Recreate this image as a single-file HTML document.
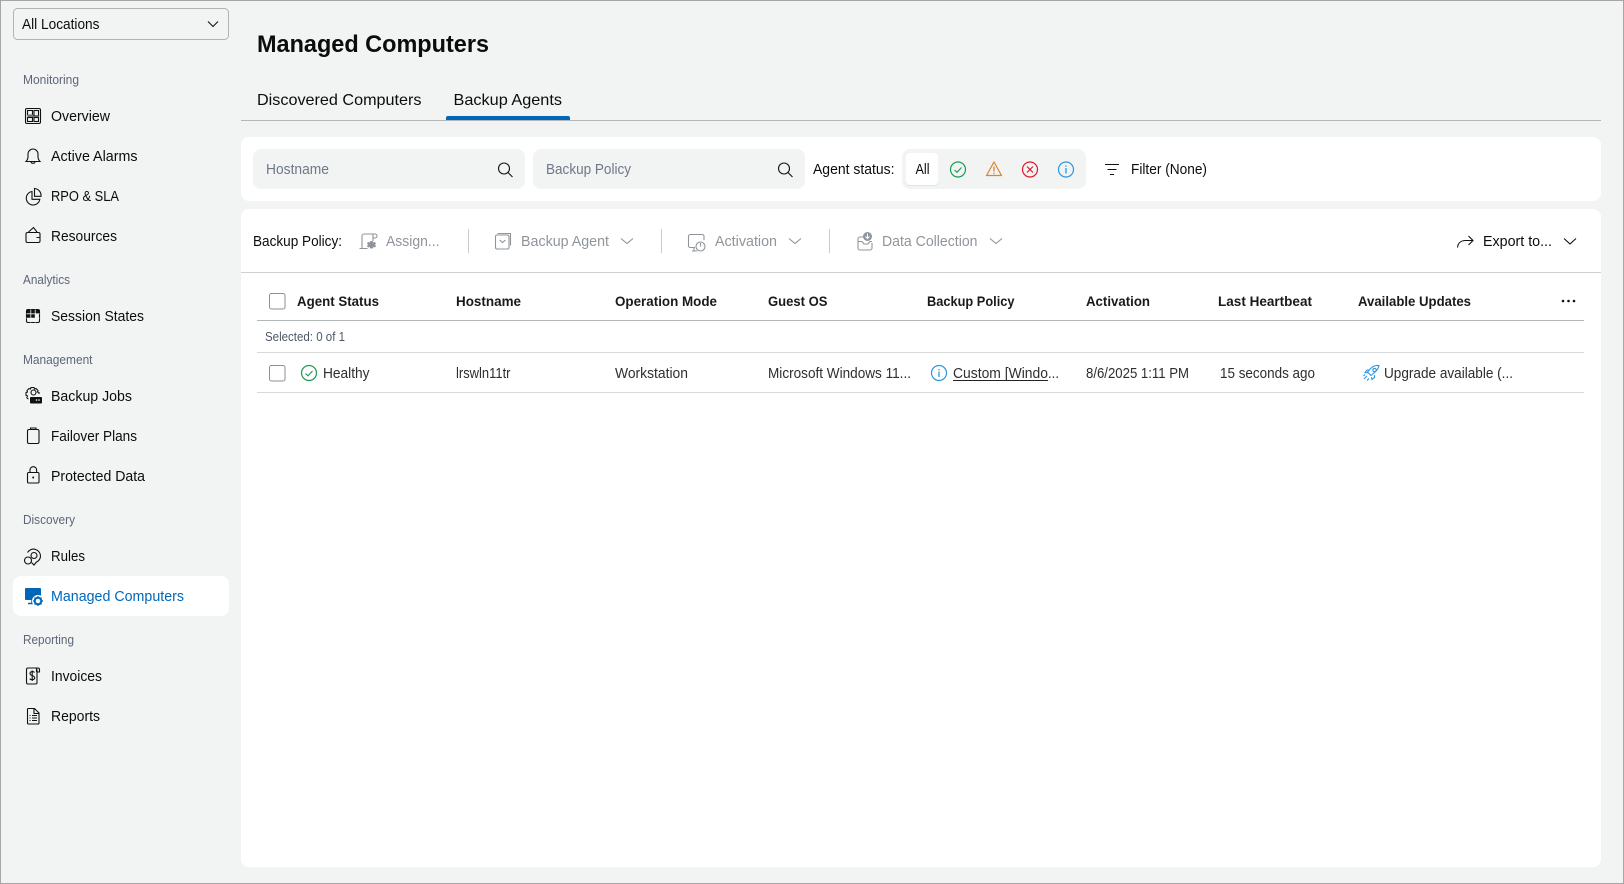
<!DOCTYPE html>
<html lang="en">
<head>
<meta charset="utf-8">
<title>Managed Computers</title>
<style>
html,body{margin:0;padding:0;background:#f2f4f4;overflow:hidden}
svg{display:block}
text{font-family:"Liberation Sans",sans-serif;font-size:14.8px;fill:#0c0c0c}
.l{font-size:12.5px;fill:#5c6678}
.g{fill:#8f959b}
.h{font-weight:bold;font-size:14px;fill:#1a1a1a}
.c{fill:#2e2e2e}
.i{fill:none;stroke:#111;stroke-width:1.1}
.d{fill:none;stroke:#8f959b;stroke-width:1.1}
</style>
</head>
<body>
<svg xmlns="http://www.w3.org/2000/svg" width="1624" height="884" viewBox="0 0 1624 884">
<rect x="0.5" y="0.5" width="1623" height="883" fill="#f2f4f4" stroke="#a6a6a6"/>

<!-- Location dropdown -->
<rect x="13.5" y="8.5" width="215" height="31" rx="4" fill="#f2f4f4" stroke="#b0b3b3"/>
<text x="22" y="29" textLength="77.5" lengthAdjust="spacingAndGlyphs">All Locations</text>
<path class="i" d="M208 21.5l5 5 5-5"/>

<!-- Sidebar -->
<text class="l" x="23" y="84" textLength="56" lengthAdjust="spacingAndGlyphs">Monitoring</text>
<text x="51" y="121" textLength="59" lengthAdjust="spacingAndGlyphs">Overview</text>
<text x="51" y="161" textLength="86.5" lengthAdjust="spacingAndGlyphs">Active Alarms</text>
<text x="51" y="201" textLength="68" lengthAdjust="spacingAndGlyphs">RPO &amp; SLA</text>
<text x="51" y="241" textLength="66" lengthAdjust="spacingAndGlyphs">Resources</text>
<text class="l" x="23" y="284" textLength="47" lengthAdjust="spacingAndGlyphs">Analytics</text>
<text x="51" y="321" textLength="93" lengthAdjust="spacingAndGlyphs">Session States</text>
<text class="l" x="23" y="364" textLength="69.500" lengthAdjust="spacingAndGlyphs">Management</text>
<text x="51" y="401" textLength="81" lengthAdjust="spacingAndGlyphs">Backup Jobs</text>
<text x="51" y="441" textLength="86" lengthAdjust="spacingAndGlyphs">Failover Plans</text>
<text x="51" y="481" textLength="94" lengthAdjust="spacingAndGlyphs">Protected Data</text>
<text class="l" x="23" y="524" textLength="52" lengthAdjust="spacingAndGlyphs">Discovery</text>
<text x="51" y="561" textLength="34" lengthAdjust="spacingAndGlyphs">Rules</text>
<rect x="13" y="576" width="216" height="40" rx="8" fill="#fff"/>
<text x="51" y="601" textLength="133" lengthAdjust="spacingAndGlyphs" style="fill:#0067b8">Managed Computers</text>
<text class="l" x="23" y="644" textLength="51" lengthAdjust="spacingAndGlyphs">Reporting</text>
<text x="51" y="681" textLength="51" lengthAdjust="spacingAndGlyphs">Invoices</text>
<text x="51" y="721" textLength="49" lengthAdjust="spacingAndGlyphs">Reports</text>

<!-- Overview icon -->
<rect class="i" x="25.500" y="108.500" width="15" height="15" rx="1.500"/>
<rect class="i" x="27.500" y="110.500" width="5" height="4.500"/>
<rect class="i" x="34" y="110.500" width="4.500" height="5.500"/>
<rect x="27.500" y="114.500" width="6" height="3" fill="#777"/>
<rect class="i" x="27.500" y="117.500" width="5" height="4"/>
<rect class="i" x="34" y="117.500" width="4.500" height="4"/>
<!-- Bell -->
<path class="i" d="M26 161.500h14c-1.500-1.500-2-3-2-5v-2.500a5 5 0 0 0-10 0v2.500c0 2-.5 3.500-2 5z"/>
<path class="i" d="M31 162c.3 1.700 3.700 1.700 4 0"/>
<!-- Pie -->
<path class="i" d="M32 191.500a6.800 6.800 0 1 0 7.800 7.800h-7.800z"/>
<path class="i" d="M34.500 188.500v7.800h6.500a7 7 0 0 0-6.500-7.800z"/>
<!-- Wallet -->
<path class="i" d="M27.500 232.500h11a1.500 1.500 0 0 1 1.500 1.500v7a1.500 1.500 0 0 1-1.500 1.500h-11a1.500 1.500 0 0 1-1.500-1.500v-7a1.500 1.500 0 0 1 1.500-1.500z"/>
<path class="i" d="M28.500 232l5-4.500 3.500 4.500M36.500 237.500h3.500"/>
<!-- Session states -->
<rect class="i" x="26.500" y="309.500" width="13" height="13" rx="1.500"/>
<path d="M26.500 311a1.500 1.500 0 0 1 1.500-1.500h2.800v4.300h-4.300zM30.800 309.500h4.400v4.300h-4.400zM26.500 313.800h4.300v4.400h-4.300zM30.800 313.800h4.400v4.400h-4.400zM35.200 309.500h2.800a1.500 1.500 0 0 1 1.500 1.500v2.800h-4.300z" fill="#111"/>
<path d="M30.800 309.500v13M35.200 309.500v13M26.500 313.800h13M26.500 318.200h13" fill="none" stroke="#f2f4f4" stroke-width=".8"/>
<!-- Backup jobs -->
<path class="i" d="M28.500 399c-1.200-.5-2-1-1.500-2l.5-1-1.500-.8v-2.700l1.500-.5-.5-1.500 2-2 1.500.5.5-1.500h3l.5 1.500 1.500-.5 2 2-.5 1.500 1.500.5v1.500"/>
<circle class="i" cx="33.500" cy="392.500" r="2.500"/>
<rect x="30" y="397" width="12" height="6.500" rx="1" fill="#111"/>
<circle cx="39" cy="400" r=".8" fill="#fff"/><circle cx="36.500" cy="400" r=".8" fill="#fff"/>
<!-- Clipboard -->
<rect class="i" x="27.500" y="429.500" width="11.500" height="14" rx="1.500"/>
<path class="i" d="M30.500 429.500v-1.500h5.500v1.500"/>
<!-- Lock -->
<rect class="i" x="27.500" y="472.500" width="11.500" height="10.500" rx="1.200"/>
<path class="i" d="M30 472.500v-2.500a3.300 3.300 0 0 1 6.600 0v2.500"/>
<circle cx="33.200" cy="477.500" r="1" fill="#111"/>
<!-- Rules -->
<path class="i" d="M27.500 552.500a7 7 0 0 1 13 3.500c0 3-2 5-4 6l-2.500 3-2.500-2.500"/>
<circle class="i" cx="34" cy="555.500" r="3"/>
<circle class="i" cx="28" cy="560.500" r="3.500"/>
<!-- Managed computers -->
<rect x="25" y="588" width="16" height="12" rx="1" fill="#0067b8"/>
<path d="M32 600v3.500M28 603.500h7" stroke="#0067b8" stroke-width="1.500" fill="none"/>
<circle cx="38" cy="601" r="6" fill="#fff"/>
<circle cx="38" cy="601" r="3.300" fill="none" stroke="#0067b8" stroke-width="2"/>
<path d="M38 596v2M38 604v2M33 601h2M41 601h2M34.500 597.500l1.400 1.400M40.100 603.100l1.400 1.400M34.500 604.500l1.400-1.400M40.100 598.900l1.400-1.400" stroke="#0067b8" stroke-width="1.300"/>
<!-- Invoice -->
<path class="i" d="M36.500 672v-2.500a1.500 1.500 0 0 1 3 0v2.500h-3M37.500 668h-9.500a1.500 1.500 0 0 0-1.500 1.500v13a1.500 1.500 0 0 0 1.500 1.500h7.500a1.500 1.500 0 0 0 1.500-1.500v-13"/>
<path d="M34.500 672.500c-1-1.300-4.500-1.300-4.500 1 0 2.500 4.700 1.700 4.700 4.300 0 2.300-3.700 2.300-5 1M32.200 670.500v10.500" fill="none" stroke="#111" stroke-width="1.100"/>
<!-- Report -->
<path class="i" d="M27.500 709.500a1 1 0 0 1 1-1h6l4.500 4.500v10a1 1 0 0 1-1 1h-9.500a1 1 0 0 1-1-1zM34 708.500v5h5"/>
<path class="i" d="M29.500 715.500h1M32 715.500h5M29.500 718h1M32 718h5M29.500 720.500h1M32 720.500h5"/>

<!-- Title and tabs -->
<text x="257" y="52" textLength="232" lengthAdjust="spacingAndGlyphs" style="font-size:24.500px;font-weight:bold;fill:#0c0c0c">Managed Computers</text>
<text x="257" y="105" textLength="164.500" lengthAdjust="spacingAndGlyphs" style="font-size:15.800px">Discovered Computers</text>
<text x="453.500" y="105" textLength="108.500" lengthAdjust="spacingAndGlyphs" style="font-size:15.800px">Backup Agents</text>
<rect x="241" y="120" width="1360" height="1" fill="#b5b7b7"/>
<path d="M446 120v-2a2 2 0 0 1 2-2h120a2 2 0 0 1 2 2v2z" fill="#0067b8"/>

<!-- Filter card -->
<rect x="241" y="137" width="1360" height="64" rx="8" fill="#fff"/>
<rect x="253" y="149" width="272" height="40" rx="8" fill="#f2f4f4"/>
<text x="266" y="174" textLength="63" lengthAdjust="spacingAndGlyphs" style="fill:#6e7886">Hostname</text>
<circle class="i" cx="504" cy="168.500" r="5.500"/><path class="i" d="M508 172.500l4.500 4.500"/>
<rect x="533" y="149" width="272" height="40" rx="8" fill="#f2f4f4"/>
<text x="546" y="174" textLength="85" lengthAdjust="spacingAndGlyphs" style="fill:#6e7886">Backup Policy</text>
<circle class="i" cx="784" cy="168.500" r="5.500"/><path class="i" d="M788 172.500l4.500 4.500"/>
<text x="813" y="174" textLength="81.500" lengthAdjust="spacingAndGlyphs">Agent status:</text>
<rect x="902" y="149" width="184" height="40" rx="8" fill="#f2f4f4"/>
<rect x="906" y="153" width="32" height="32" rx="4" fill="#dcdddd" transform="translate(0 .8)"/>
<rect x="906" y="153" width="32" height="32" rx="4" fill="#fff"/>
<text x="915.500" y="174" textLength="14" lengthAdjust="spacingAndGlyphs">All</text>
<circle cx="958" cy="169.500" r="7.500" fill="none" stroke="#1c9a54" stroke-width="1.200"/><path d="M954.500 170l2.500 2.300 4.500-4.800" fill="none" stroke="#1c9a54" stroke-width="1.100"/>
<path d="M994 162l7.500 13.500h-15z" fill="none" stroke="#d98427" stroke-width="1.200" stroke-linejoin="round"/><path d="M994 166.500v5M994 172.800v1.200" stroke="#d98427" stroke-width="1.300"/>
<circle cx="1030" cy="169.500" r="7.500" fill="none" stroke="#e0172b" stroke-width="1.200"/><path d="M1027 166.500l6 6M1033 166.500l-6 6" stroke="#e0172b" stroke-width="1.200"/>
<circle cx="1066" cy="169.500" r="7.500" fill="none" stroke="#2a97e0" stroke-width="1.200"/><path d="M1066 168v5.500M1066 165.500v1.300" stroke="#2a97e0" stroke-width="1.300"/>
<path class="i" d="M1105 164.500h14M1107.500 169.500h9M1110 174.500h4"/>
<text x="1131" y="174" textLength="76" lengthAdjust="spacingAndGlyphs">Filter (None)</text>

<!-- Main card -->
<rect x="241" y="209" width="1360" height="658" rx="8" fill="#fff"/>
<text x="253" y="246" textLength="89" lengthAdjust="spacingAndGlyphs">Backup Policy:</text>
<path class="d" d="M362 248v-12a2 2 0 0 1 2-2h11a2 2 0 0 1 0 4h-2.500M362 236v12M373 234v7M359.500 248.500h8"/>
<path d="M372.500 241l1 1.500 1.500-.5 1 1.500-1 1 1 1.500-1 1.500-1.500-.5-1 1.500h-2l-1-1.500-1.500.5-1-1.500 1-1.500-1-1 1-1.500 1.500.5 1-1.500z" fill="#8f959b"/>
<text class="g" x="386" y="246" textLength="53.500" lengthAdjust="spacingAndGlyphs">Assign...</text>
<rect x="468" y="229" width="1" height="24" fill="#c9cbcb"/>
<rect class="d" x="495.500" y="235" width="13.500" height="14" rx="1.500"/><path class="d" d="M497.500 233.500h13v12M499.500 240l3 2.500 3-2.500"/>
<text class="g" x="521" y="246" textLength="88" lengthAdjust="spacingAndGlyphs">Backup Agent</text>
<path class="d" d="M621 238.500l6 5 6-5"/>
<rect x="661" y="229" width="1" height="24" fill="#c9cbcb"/>
<path class="d" d="M695 247.500h-5a2 2 0 0 1-1.500-1.500v-10a2 2 0 0 1 1.500-1.500h12a2 2 0 0 1 2 1.500v4M692 251h5M694 248v3"/>
<circle class="d" cx="700.500" cy="246.500" r="4.500"/><path class="d" d="M700.500 243v3.500"/>
<text class="g" x="715" y="246" textLength="62" lengthAdjust="spacingAndGlyphs">Activation</text>
<path class="d" d="M789 238.500l6 5 6-5"/>
<rect x="829" y="229" width="1" height="24" fill="#c9cbcb"/>
<path class="d" d="M864 237h-4a2 2 0 0 0-2 2v9a2 2 0 0 0 2 2h10a2 2 0 0 0 2-2v-5M858 241.500h4l2 2.500h4l2-2.500h2"/>
<circle cx="867.500" cy="236.500" r="4.500" fill="#8f959b"/><path d="M867.500 233.500v4.500M865.500 236.500l2 2 2-2" stroke="#fff" fill="none" stroke-width="1"/>
<text class="g" x="882" y="246" textLength="95.500" lengthAdjust="spacingAndGlyphs">Data Collection</text>
<path class="d" d="M990 238.500l6 5 6-5"/>
<path class="i" d="M1457.500 247.500c.5-4.500 3.500-7 8-7h7.500M1468.500 236l4.500 4.500-4.500 4.500"/>
<text x="1483" y="246" textLength="69" lengthAdjust="spacingAndGlyphs">Export to...</text>
<path class="i" d="M1564 238.500l6 5.500 6-5.500"/>
<rect x="241" y="272" width="1360" height="1" fill="#d0d2d2"/>

<!-- Table -->
<rect x="269.500" y="293.500" width="15.500" height="15.500" rx="2" fill="#fff" stroke="#8d9092"/>
<text class="h" x="297" y="306" textLength="82" lengthAdjust="spacingAndGlyphs">Agent Status</text>
<text class="h" x="456" y="306" textLength="65" lengthAdjust="spacingAndGlyphs">Hostname</text>
<text class="h" x="615" y="306" textLength="102" lengthAdjust="spacingAndGlyphs">Operation Mode</text>
<text class="h" x="768" y="306" textLength="59.500" lengthAdjust="spacingAndGlyphs">Guest OS</text>
<text class="h" x="927" y="306" textLength="87.500" lengthAdjust="spacingAndGlyphs">Backup Policy</text>
<text class="h" x="1086" y="306" textLength="64" lengthAdjust="spacingAndGlyphs">Activation</text>
<text class="h" x="1218" y="306" textLength="94" lengthAdjust="spacingAndGlyphs">Last Heartbeat</text>
<text class="h" x="1358" y="306" textLength="113" lengthAdjust="spacingAndGlyphs">Available Updates</text>
<circle cx="1563" cy="301" r="1.300" fill="#111"/><circle cx="1568.500" cy="301" r="1.300" fill="#111"/><circle cx="1574" cy="301" r="1.300" fill="#111"/>
<rect x="257" y="320" width="1327" height="1" fill="#b3b6b6"/>
<text class="l" x="265" y="341" textLength="80" lengthAdjust="spacingAndGlyphs" style="fill:#4d5866">Selected: 0 of 1</text>
<rect x="257" y="352" width="1327" height="1" fill="#d8dada"/>
<rect x="269.500" y="365.500" width="15.500" height="15.500" rx="2" fill="#fff" stroke="#8d9092"/>
<circle cx="309" cy="373" r="7.500" fill="none" stroke="#1c9a54" stroke-width="1.200"/><path d="M305.500 373.500l2.500 2.300 4.500-4.800" fill="none" stroke="#1c9a54" stroke-width="1.100"/>
<text class="c" x="323" y="378" textLength="46.500" lengthAdjust="spacingAndGlyphs">Healthy</text>
<text class="c" x="456" y="378" textLength="54.500" lengthAdjust="spacingAndGlyphs">lrswln11tr</text>
<text class="c" x="615" y="378" textLength="73" lengthAdjust="spacingAndGlyphs">Workstation</text>
<text class="c" x="768" y="378" textLength="143" lengthAdjust="spacingAndGlyphs">Microsoft Windows 11...</text>
<circle cx="939" cy="373" r="7.500" fill="none" stroke="#2a97e0" stroke-width="1.200"/><path d="M939 371.500v5.500M939 369v1.300" stroke="#2a97e0" stroke-width="1.300"/>
<text class="c" x="953" y="378" textLength="95" lengthAdjust="spacingAndGlyphs">Custom [Windo</text>
<text class="c" x="1048" y="378" textLength="11" lengthAdjust="spacingAndGlyphs">...</text>
<rect x="953" y="380" width="95" height="1" fill="#222"/>
<text class="c" x="1086" y="378" textLength="103" lengthAdjust="spacingAndGlyphs">8/6/2025 1:11 PM</text>
<text class="c" x="1220" y="378" textLength="95" lengthAdjust="spacingAndGlyphs">15 seconds ago</text>
<path d="M1379 365.500c-3.500-.5-6.500 1-8.500 3l-3 3.500 3.500 3.500 3.500-3c2.500-2 4-4.500 4.500-7zM1369.500 370h-2.500l-2 2.500 2.500.5M1374.500 375v2.500l-2.500 2-.5-2.500" fill="none" stroke="#2a97e0" stroke-width="1.100"/>
<circle cx="1374.500" cy="370" r="1.700" fill="none" stroke="#2a97e0" stroke-width="1.100"/>
<path d="M1367 376l-3 3M1369 378.500l-2 2M1365 374.500l-1.500 1.500" stroke="#2a97e0" stroke-width="1.100"/>
<text class="c" x="1384" y="378" textLength="129" lengthAdjust="spacingAndGlyphs">Upgrade available (...</text>
<rect x="257" y="392" width="1327" height="1" fill="#d8dada"/>
</svg>
</body>
</html>
